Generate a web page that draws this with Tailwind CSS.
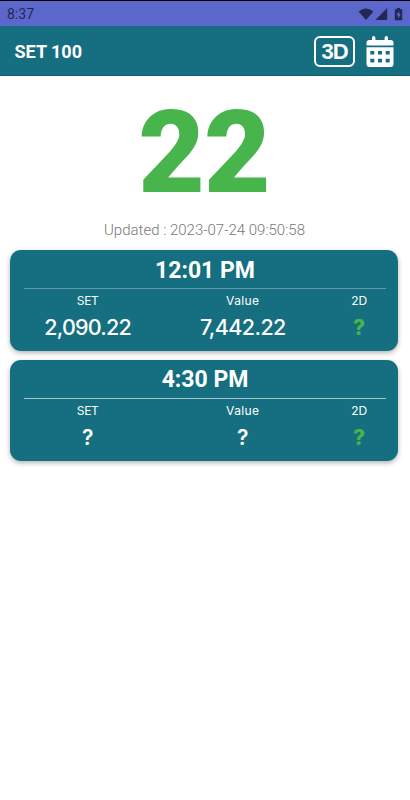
<!DOCTYPE html>
<html lang="en">
<head>
<meta charset="utf-8">
<meta name="viewport" content="width=device-width, initial-scale=1">
<title>SET 100</title>
<script src="https://cdn.jsdelivr.net/npm/@tailwindcss/browser@4"></script>
</head>
<body class="flex h-[800px] w-[410px] flex-col overflow-hidden bg-white font-['Roboto',sans-serif]">
  <div class="flex h-[26px] shrink-0 items-center justify-between border-t border-black bg-[#5c67cb] pl-[7px] pr-[7px] pt-[1px] text-[#222753]">
    <span class="text-[14px] leading-none">8:37</span>
    <svg class="h-[14px] w-[45px]" viewBox="0 0 45 14" fill="currentColor">
      <path d="M.6 4.5Q8-1.7 15.4 4.5L8 13Z"/>
      <path d="M29.2 1v12H17.4Z"/>
      <path fill-rule="evenodd" d="M39 1h3v1.3h2.2v10.9h-7.4V2.3H39ZM41.2 4l-2.8 4.2h1.8v3.3L42.8 7h-1.6Z"/>
    </svg>
  </div>
  <header class="flex h-[50px] shrink-0 items-center border-b border-[#0b6172] bg-[#156f80] pl-[14.5px] pr-[16px] pt-[2px] text-white">
    <h1 class="grow text-[18px] font-bold leading-none">SET 100</h1>
    <div class="mr-[11px] flex h-[31px] w-[41px] items-center justify-center rounded-[6px] border-[2.5px] border-white">
      <span class="font-['Liberation_Sans',sans-serif] text-[22px] font-bold leading-none tracking-[-1px]">3D</span>
    </div>
    <svg class="h-[31px] w-[28px]" viewBox="0 0 28 31">
      <path fill="white" d="M6 1.8a1.7 1.7 0 0 1 3.4 0V4h9.2V1.8a1.7 1.7 0 0 1 3.4 0V4h2.5A3 3 0 0 1 27.5 7v2.6H.5V7a3 3 0 0 1 3-3H6Z"/>
      <path fill="white" fill-rule="evenodd" d="M.5 11.3h27V28a3 3 0 0 1-3 3h-21a3 3 0 0 1-3-3ZM4.3 15v3.6h4V15Zm7.7 0v3.6h4V15Zm7.7 0v3.6h4V15ZM4.3 22.8v3.6h4v-3.6Zm7.7 0v3.6h4v-3.6Zm7.7 0v3.6h4v-3.6Z"/>
    </svg>
  </header>
  <main class="flex flex-col pl-[10px] pr-[12px]">
    <div class="mt-[17px] h-[120px] text-center text-[115px] font-black leading-[120px] tracking-[-1px] text-[#48b44c]">22</div>
    <p class="mt-[8px] h-[18px] pl-px text-center text-[15px] font-light leading-[18px] text-[#777]">Updated : 2023-07-24 09:50:58</p>
    <section class="mt-[11px] h-[101px] rounded-[11px] bg-[#156f80] text-white shadow-[0_2px_5px_rgba(0,0,0,0.3)]">
      <h2 class="ml-[14px] mr-[12px] h-[39px] border-b border-white/30 pt-[7px] text-center text-[23px] font-bold leading-[28px]">12:01 PM</h2>
      <div class="grid grid-cols-[2fr_2fr_1fr] text-center font-['Inter',sans-serif]">
        <span class="mt-[4px] text-[12px] leading-[16px] tracking-[-0.4px]">SET</span>
        <span class="mt-[4px] text-[12px] leading-[16px] tracking-[0.4px]">Value</span>
        <span class="mt-[4px] text-[12px] leading-[16px]">2D</span>
        <span class="mt-[4px] text-[21.5px] font-medium leading-[28px] tracking-[-0.8px]">2,090.22</span>
        <span class="mt-[4px] text-[21.5px] font-medium leading-[28px] tracking-[-0.6px]">7,442.22</span>
        <span class="mt-[5px] text-[21px] font-extrabold leading-[28px] text-[#48b44c]">?</span>
      </div>
    </section>
    <section class="mt-[9px] h-[101px] rounded-[11px] bg-[#156f80] text-white shadow-[0_2px_5px_rgba(0,0,0,0.3)]">
      <h2 class="ml-[14px] mr-[12px] h-[39px] border-b border-white/60 pt-[6px] text-center text-[23px] font-bold leading-[28px]">4:30 PM</h2>
      <div class="grid grid-cols-[2fr_2fr_1fr] text-center font-['Inter',sans-serif]">
        <span class="mt-[4px] text-[12px] leading-[16px] tracking-[-0.4px]">SET</span>
        <span class="mt-[4px] text-[12px] leading-[16px] tracking-[0.4px]">Value</span>
        <span class="mt-[4px] text-[12px] leading-[16px]">2D</span>
        <span class="mt-[5px] text-[21px] font-semibold leading-[28px]">?</span>
        <span class="mt-[5px] text-[21px] font-semibold leading-[28px]">?</span>
        <span class="mt-[5px] text-[21px] font-extrabold leading-[28px] text-[#48b44c]">?</span>
      </div>
    </section>
  </main>
</body>
</html>
